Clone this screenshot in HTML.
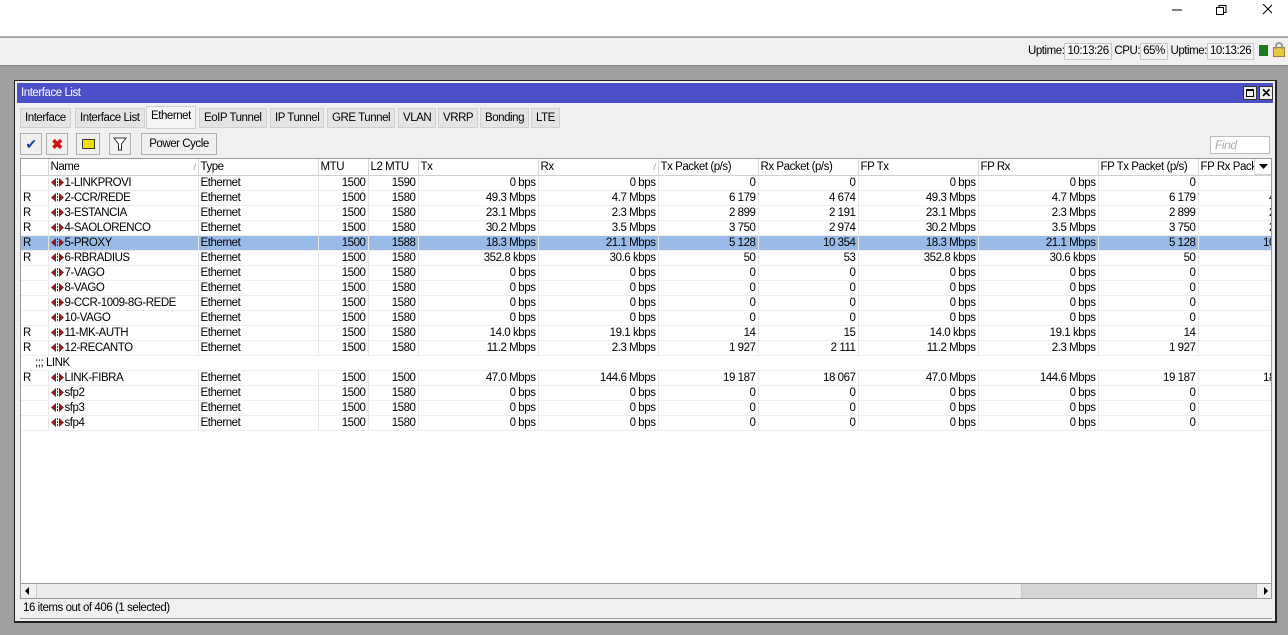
<!DOCTYPE html>
<html><head><meta charset="utf-8"><style>
*{margin:0;padding:0;box-sizing:border-box}
body{width:1288px;height:635px;overflow:hidden;background:#a0a0a0;font-family:"Liberation Sans",Arial,sans-serif;font-size:11.5px;color:#000;position:relative;letter-spacing:-0.45px}
.abs{position:absolute}
#top{left:0;top:0;width:1288px;height:37px;background:#fff;border-bottom:1px solid #b8b8b8}
#bar{left:0;top:38px;width:1288px;height:28px;background:#f0f0f0;border-bottom:1px solid #8a8a8a}
.box{display:inline-block;background:#f4f4f4;border:1px solid #c8c8c8;padding:0 2px;height:17px;line-height:15px}
#win{left:14px;top:80px;width:1263px;height:543px;background:#f0f0f0;border:1px solid #222;border-width:1px 2px 2px 1px}
#title{left:2px;top:2px;width:1256px;height:20px;background:#4b50c8;color:#fff;line-height:20px;padding-left:4px}
.tb{position:absolute;top:3px;width:14px;height:14px;background:#eee;border:1px solid #333}
.tab{position:absolute;top:27px;height:20px;line-height:19px;background:#e4e4e4;border:1px solid #d0d0d0;padding:0 4px}
.btn{position:absolute;top:52px;height:22px;border:1px solid #adadad;background:#f0f0f0;line-height:20px;text-align:center}
#list{left:5px;top:77px;width:1252px;height:426px;background:#fff;border:1px solid #9a9a9a;overflow:hidden}
table{border-collapse:collapse;table-layout:fixed;width:1277px}
td{height:15px;line-height:14px;padding:0 2px;white-space:nowrap;overflow:hidden;border-right:1px solid #e6e6e6;border-bottom:1px solid #eeeeee}
tr.h td{height:16px;background:#fff;border-right:1px solid #d6d6d6;border-bottom:1px solid #cfcfcf}
td.r{text-align:right}
tr.sel td{background:#99bbe8}
.ic{display:inline-block;width:13px;height:9px;vertical-align:-1px;margin-right:1px}
</style></head><body>
<div id="top" class="abs">
<svg class="abs" style="left:1172px;top:4px" width="100" height="12"><line x1="0" y1="6" x2="10" y2="6" stroke="#000"/><rect x="44.5" y="3.5" width="7" height="7" fill="none" stroke="#000"/><path d="M47 3.5V1.5h7v7h-2" fill="none" stroke="#000"/><path d="M91 0l10 10M101 0l-10 10" stroke="#000"/></svg>
</div>
<div id="bar" class="abs">
<div class="abs" style="left:1028px;top:5px;white-space:nowrap;letter-spacing:-0.45px">Uptime:<span class="box">10:13:26</span> CPU:<span class="box">65%</span> Uptime:<span class="box">10:13:26</span></div>
<div class="abs" style="left:1259px;top:7px;width:9px;height:11px;background:#1d7a1d"></div>
<div class="abs" style="left:1273px;top:9px;width:12px;height:10px;background:#e8c840;border:1px solid #a08020"></div>
<div class="abs" style="left:1275px;top:4px;width:8px;height:7px;border:2px solid #999;border-bottom:none;border-radius:4px 4px 0 0"></div>
</div>
<div id="win" class="abs">
<div id="title" class="abs">Interface List
<div class="tb" style="left:1226px"><div style="margin:2px;width:8px;height:8px;border:1px solid #000;border-top-width:2px"></div></div>
<div class="tb" style="left:1242px;font-weight:bold;color:#000;line-height:12px;text-align:center;font-size:12px">✕</div>
</div>
<div class="tab" style="left:5px">Interface</div>
<div class="tab" style="left:60px">Interface List</div>
<div class="tab" style="left:131px;top:25px;height:23px;background:#f5f5f5">Ethernet</div>
<div class="tab" style="left:184px">EoIP Tunnel</div>
<div class="tab" style="left:255px">IP Tunnel</div>
<div class="tab" style="left:312px">GRE Tunnel</div>
<div class="tab" style="left:383px">VLAN</div>
<div class="tab" style="left:423px">VRRP</div>
<div class="tab" style="left:465px">Bonding</div>
<div class="tab" style="left:516px">LTE</div>
<div class="btn" style="left:5px;width:22px;color:#1a3cb0;font-size:14px">✔</div>
<div class="btn" style="left:31px;width:22px;color:#d01010;font-weight:bold;font-size:14px">✖</div>
<div class="btn" style="left:61px;width:24px"><div style="margin:5px auto;width:13px;height:10px;background:#f3e000;border:1px solid #333"></div></div>
<div class="btn" style="left:94px;width:22px"><svg width="14" height="16" style="margin-top:2px"><path d="M1 2h12l-4.5 6v6h-3v-6z" fill="#fff" stroke="#333"/></svg></div>
<div class="btn" style="left:126px;width:76px">Power Cycle</div>
<div class="abs" style="left:1195px;top:55px;width:60px;height:18px;background:#fff;border:1px solid #bbb;color:#aaa;font-style:italic;padding-left:4px;line-height:16px;font-size:12px">Find</div>
<div id="list" class="abs">
<svg width="0" height="0" style="position:absolute"><defs><g id="i"><path d="M0 4.5L5 0v9z" fill="#8b1e1e"/><path d="M6.5 0v9" stroke="#8b1e1e" stroke-dasharray="2 1"/><path d="M13 4.5L8 0v9z" fill="#8b1e1e"/></g></defs></svg>
<table>
<colgroup><col style="width:27px"><col style="width:150px"><col style="width:120px"><col style="width:50px"><col style="width:50px"><col style="width:120px"><col style="width:120px"><col style="width:100px"><col style="width:100px"><col style="width:120px"><col style="width:120px"><col style="width:100px"><col style="width:100px"></colgroup>
<tr class="h"><td></td><td>Name<span style="float:right;color:#999;font-size:9px">/</span></td><td>Type</td><td>MTU</td><td>L2 MTU</td><td>Tx</td><td>Rx<span style="float:right;color:#999;font-size:9px">/</span></td><td>Tx Packet (p/s)</td><td>Rx Packet (p/s)</td><td>FP Tx</td><td>FP Rx</td><td>FP Tx Packet (p/s)</td><td>FP Rx Pack</td></tr>
<tr><td></td><td><svg class="ic"><use href="#i"/></svg>1-LINKPROVI</td><td>Ethernet</td><td class="r">1500</td><td class="r">1590</td><td class="r">0 bps</td><td class="r">0 bps</td><td class="r">0</td><td class="r">0</td><td class="r">0 bps</td><td class="r">0 bps</td><td class="r">0</td><td class="r">0</td></tr>
<tr><td>R</td><td><svg class="ic"><use href="#i"/></svg>2-CCR/REDE</td><td>Ethernet</td><td class="r">1500</td><td class="r">1580</td><td class="r">49.3 Mbps</td><td class="r">4.7 Mbps</td><td class="r">6 179</td><td class="r">4 674</td><td class="r">49.3 Mbps</td><td class="r">4.7 Mbps</td><td class="r">6 179</td><td class="r">4 674</td></tr>
<tr><td>R</td><td><svg class="ic"><use href="#i"/></svg>3-ESTANCIA</td><td>Ethernet</td><td class="r">1500</td><td class="r">1580</td><td class="r">23.1 Mbps</td><td class="r">2.3 Mbps</td><td class="r">2 899</td><td class="r">2 191</td><td class="r">23.1 Mbps</td><td class="r">2.3 Mbps</td><td class="r">2 899</td><td class="r">2 191</td></tr>
<tr><td>R</td><td><svg class="ic"><use href="#i"/></svg>4-SAOLORENCO</td><td>Ethernet</td><td class="r">1500</td><td class="r">1580</td><td class="r">30.2 Mbps</td><td class="r">3.5 Mbps</td><td class="r">3 750</td><td class="r">2 974</td><td class="r">30.2 Mbps</td><td class="r">3.5 Mbps</td><td class="r">3 750</td><td class="r">2 974</td></tr>
<tr class="sel"><td>R</td><td><svg class="ic"><use href="#i"/></svg>5-PROXY</td><td>Ethernet</td><td class="r">1500</td><td class="r">1588</td><td class="r">18.3 Mbps</td><td class="r">21.1 Mbps</td><td class="r">5 128</td><td class="r">10 354</td><td class="r">18.3 Mbps</td><td class="r">21.1 Mbps</td><td class="r">5 128</td><td class="r">10 354</td></tr>
<tr><td>R</td><td><svg class="ic"><use href="#i"/></svg>6-RBRADIUS</td><td>Ethernet</td><td class="r">1500</td><td class="r">1580</td><td class="r">352.8 kbps</td><td class="r">30.6 kbps</td><td class="r">50</td><td class="r">53</td><td class="r">352.8 kbps</td><td class="r">30.6 kbps</td><td class="r">50</td><td class="r">53</td></tr>
<tr><td></td><td><svg class="ic"><use href="#i"/></svg>7-VAGO</td><td>Ethernet</td><td class="r">1500</td><td class="r">1580</td><td class="r">0 bps</td><td class="r">0 bps</td><td class="r">0</td><td class="r">0</td><td class="r">0 bps</td><td class="r">0 bps</td><td class="r">0</td><td class="r">0</td></tr>
<tr><td></td><td><svg class="ic"><use href="#i"/></svg>8-VAGO</td><td>Ethernet</td><td class="r">1500</td><td class="r">1580</td><td class="r">0 bps</td><td class="r">0 bps</td><td class="r">0</td><td class="r">0</td><td class="r">0 bps</td><td class="r">0 bps</td><td class="r">0</td><td class="r">0</td></tr>
<tr><td></td><td><svg class="ic"><use href="#i"/></svg>9-CCR-1009-8G-REDE</td><td>Ethernet</td><td class="r">1500</td><td class="r">1580</td><td class="r">0 bps</td><td class="r">0 bps</td><td class="r">0</td><td class="r">0</td><td class="r">0 bps</td><td class="r">0 bps</td><td class="r">0</td><td class="r">0</td></tr>
<tr><td></td><td><svg class="ic"><use href="#i"/></svg>10-VAGO</td><td>Ethernet</td><td class="r">1500</td><td class="r">1580</td><td class="r">0 bps</td><td class="r">0 bps</td><td class="r">0</td><td class="r">0</td><td class="r">0 bps</td><td class="r">0 bps</td><td class="r">0</td><td class="r">0</td></tr>
<tr><td>R</td><td><svg class="ic"><use href="#i"/></svg>11-MK-AUTH</td><td>Ethernet</td><td class="r">1500</td><td class="r">1580</td><td class="r">14.0 kbps</td><td class="r">19.1 kbps</td><td class="r">14</td><td class="r">15</td><td class="r">14.0 kbps</td><td class="r">19.1 kbps</td><td class="r">14</td><td class="r">15</td></tr>
<tr><td>R</td><td><svg class="ic"><use href="#i"/></svg>12-RECANTO</td><td>Ethernet</td><td class="r">1500</td><td class="r">1580</td><td class="r">11.2 Mbps</td><td class="r">2.3 Mbps</td><td class="r">1 927</td><td class="r">2 111</td><td class="r">11.2 Mbps</td><td class="r">2.3 Mbps</td><td class="r">1 927</td><td class="r">2 111</td></tr>
<tr><td colspan="13" style="padding-left:14px;border-right:none">;;; LINK</td></tr>
<tr><td>R</td><td><svg class="ic"><use href="#i"/></svg>LINK-FIBRA</td><td>Ethernet</td><td class="r">1500</td><td class="r">1500</td><td class="r">47.0 Mbps</td><td class="r">144.6 Mbps</td><td class="r">19 187</td><td class="r">18 067</td><td class="r">47.0 Mbps</td><td class="r">144.6 Mbps</td><td class="r">19 187</td><td class="r">18 067</td></tr>
<tr><td></td><td><svg class="ic"><use href="#i"/></svg>sfp2</td><td>Ethernet</td><td class="r">1500</td><td class="r">1580</td><td class="r">0 bps</td><td class="r">0 bps</td><td class="r">0</td><td class="r">0</td><td class="r">0 bps</td><td class="r">0 bps</td><td class="r">0</td><td class="r">0</td></tr>
<tr><td></td><td><svg class="ic"><use href="#i"/></svg>sfp3</td><td>Ethernet</td><td class="r">1500</td><td class="r">1580</td><td class="r">0 bps</td><td class="r">0 bps</td><td class="r">0</td><td class="r">0</td><td class="r">0 bps</td><td class="r">0 bps</td><td class="r">0</td><td class="r">0</td></tr>
<tr><td></td><td><svg class="ic"><use href="#i"/></svg>sfp4</td><td>Ethernet</td><td class="r">1500</td><td class="r">1580</td><td class="r">0 bps</td><td class="r">0 bps</td><td class="r">0</td><td class="r">0</td><td class="r">0 bps</td><td class="r">0 bps</td><td class="r">0</td><td class="r">0</td></tr>
</table>
<div class="abs" style="left:1233px;top:0;width:18px;height:16px;background:#fff;border-left:1px solid #d6d6d6;border-bottom:1px solid #cfcfcf"><svg width="16" height="14"><path d="M4 5h9l-4.5 5z" fill="#000"/></svg></div>
</div>
<div class="abs" style="left:5px;top:502px;width:1252px;height:16px;background:#f0f0f0;border:1px solid #9a9a9a">
<div class="abs" style="left:0;top:0;width:15px;height:14px"><svg width="15" height="14"><path d="M4 7l4-4v8z" fill="#000"/></svg></div>
<div class="abs" style="left:15px;top:0;width:986px;height:14px;background:#ececec;border-left:1px solid #c8c8c8;border-right:1px solid #c8c8c8"></div>
<div class="abs" style="left:1001px;top:0;width:234px;height:14px;background:#d4d4d4"></div>
<div class="abs" style="right:0;top:0;width:15px;height:14px;border-left:1px solid #c8c8c8"><svg width="15" height="14"><path d="M11 7l-4-4v8z" fill="#000"/></svg></div>
</div>
<div class="abs" style="left:5px;top:520px;width:1252px;height:18px;border-bottom:1px solid #a0a0a0;line-height:15px;padding-left:3px">16 items out of 406 (1 selected)</div>
</div>
</body></html>
